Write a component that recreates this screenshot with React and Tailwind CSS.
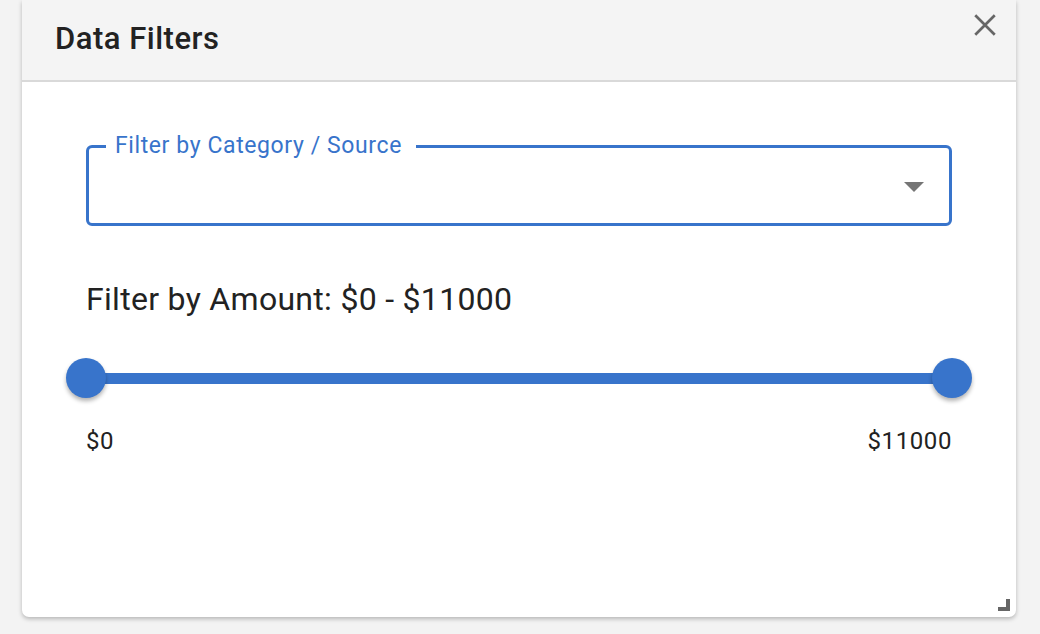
export default function App() {
  return (
    <div className="w-[1040px] h-[634px] bg-[#f3f3f3] overflow-hidden" style={{ fontFamily: "Roboto, 'Noto Sans', sans-serif" }}>
      <div className="ml-[22px] w-[994px] h-[617px] bg-white rounded-b-[7px] shadow-[0_2px_4px_rgba(0,0,0,0.25)] flex flex-col relative">
        <div className="h-[82px] bg-[#f4f4f4] border-b-2 border-[#d9d9d9] flex items-center justify-between pl-[33px] pr-[18px] shrink-0">
          <h1 className="text-[31px] font-medium text-[#222] leading-none tracking-[0.5px] -mt-[4px]">Data Filters</h1>
          <svg width="26" height="26" viewBox="0 0 24 24" className="-mt-[30px]">
            <path d="M3 3 L21 21 M21 3 L3 21" stroke="#666" strokeWidth="2.5" fill="none" />
          </svg>
        </div>
        <div className="px-[64px] pt-[63px]">
          <div className="relative h-[81px] border-[3px] border-[#3874cb] rounded-[6px] flex items-center justify-end pr-[25px]">
            <span className="absolute left-[17px] -top-[16px] bg-white pl-[9px] pr-[14px] text-[23px] leading-[28px] tracking-[0.6px] text-[#3874cb]">
              Filter by Category / Source
            </span>
            <svg width="20" height="10" viewBox="0 0 20 10" className="mt-[3px]">
              <path d="M0 0 L20 0 L10 10 Z" fill="#757575" />
            </svg>
          </div>
          <div className="mt-[55px] text-[32px] leading-[36px] tracking-[0.3px] text-[#222]">Filter by Amount: $0 - $11000</div>
          <div className="relative mt-[41px] h-[40px] flex items-center">
            <div className="w-full h-[11px] bg-[#3874cb]"></div>
            <div className="absolute -left-[20px] top-0 w-[40px] h-[40px] rounded-full bg-[#3874cb] shadow-[0_3px_4px_rgba(0,0,0,0.3)]"></div>
            <div className="absolute -right-[20px] top-0 w-[40px] h-[40px] rounded-full bg-[#3874cb] shadow-[0_3px_4px_rgba(0,0,0,0.3)]"></div>
          </div>
          <div className="mt-[30px] flex justify-between text-[24px] leading-[26px] tracking-[0.6px] text-[#222]">
            <span>$0</span>
            <span>$11000</span>
          </div>
        </div>
        <svg width="12" height="12" viewBox="0 0 12 12" className="absolute right-[6px] bottom-[6px]">
          <path d="M8 0 H12 V12 H0 V8 H8 Z" fill="#666" />
        </svg>
      </div>
    </div>
  );
}
